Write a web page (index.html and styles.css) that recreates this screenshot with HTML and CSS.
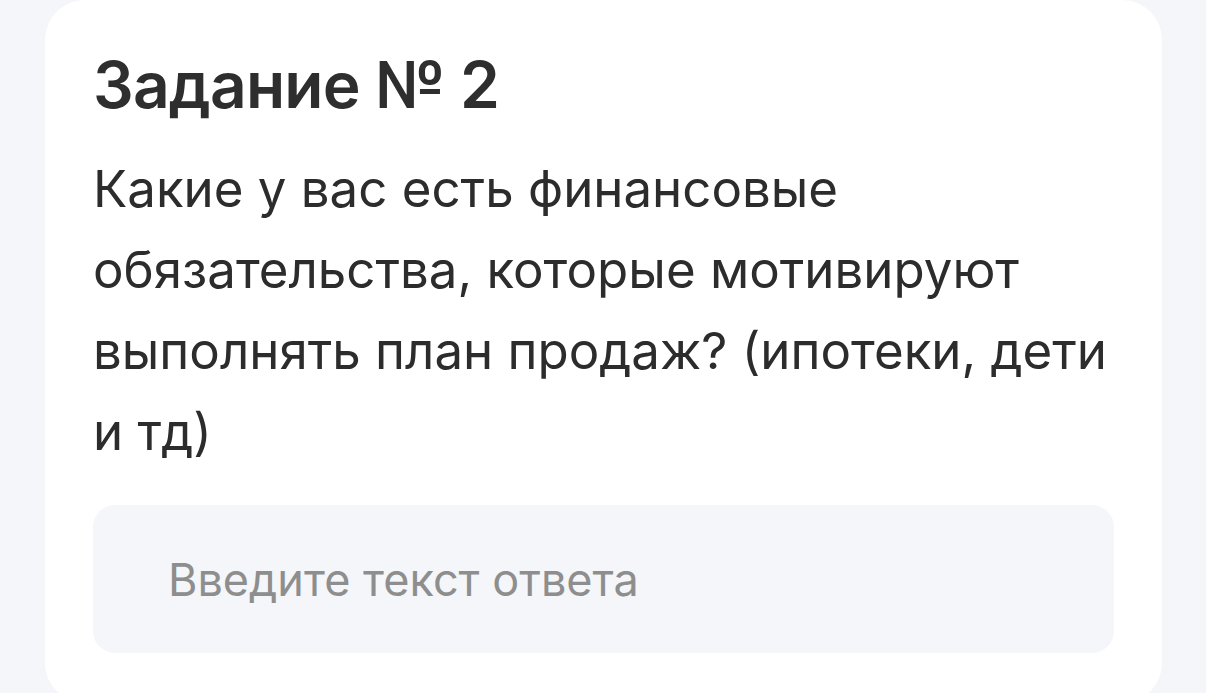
FILE: index.html
```html
<!DOCTYPE html>
<html lang="ru">
<head>
<meta charset="utf-8">
<title>Задание № 2</title>
<link rel="stylesheet" href="styles.css">
</head>
<body>
<main class="page">
  <section class="card">
    <h1 class="card-title">Задание № 2</h1>
    <p class="card-question">Какие у вас есть финансовые<br>обязательства, которые мотивируют<br>выполнять план продаж? (ипотеки, дети<br>и тд)</p>
    <div class="answer-field">
      <span class="answer-placeholder">Введите текст ответа</span>
    </div>
  </section>
</main>
</body>
</html>
```

FILE: styles.css
```css
html, body {
  margin: 0;
  padding: 0;
  background: #f4f6f9;
  font-family: Inter, "Noto Sans", sans-serif;
  overflow: hidden;
}

.page {
  padding-left: 45px;
  width: 1117px;
}

.card {
  background: #ffffff;
  border-radius: 40px;
  padding: 52px 48px 50px;
  display: flex;
  flex-direction: column;
}

.card-title {
  margin: 0;
  font-size: 64px;
  line-height: 66px;
  font-weight: 600;
  color: #2e2e2e;
  letter-spacing: -0.8px;
}

.card-question {
  margin: 30px 0 0;
  font-size: 51px;
  line-height: 81px;
  font-weight: 400;
  color: #2c2c2c;
  letter-spacing: 0;
}

.answer-field {
  margin-top: 33px;
  height: 148px;
  border-radius: 22px;
  background: #f4f6f9;
  display: flex;
  align-items: center;
  padding-left: 75px;
}

.answer-placeholder {
  font-size: 45px;
  color: #8e8e8e;
  letter-spacing: 0;
}
```
